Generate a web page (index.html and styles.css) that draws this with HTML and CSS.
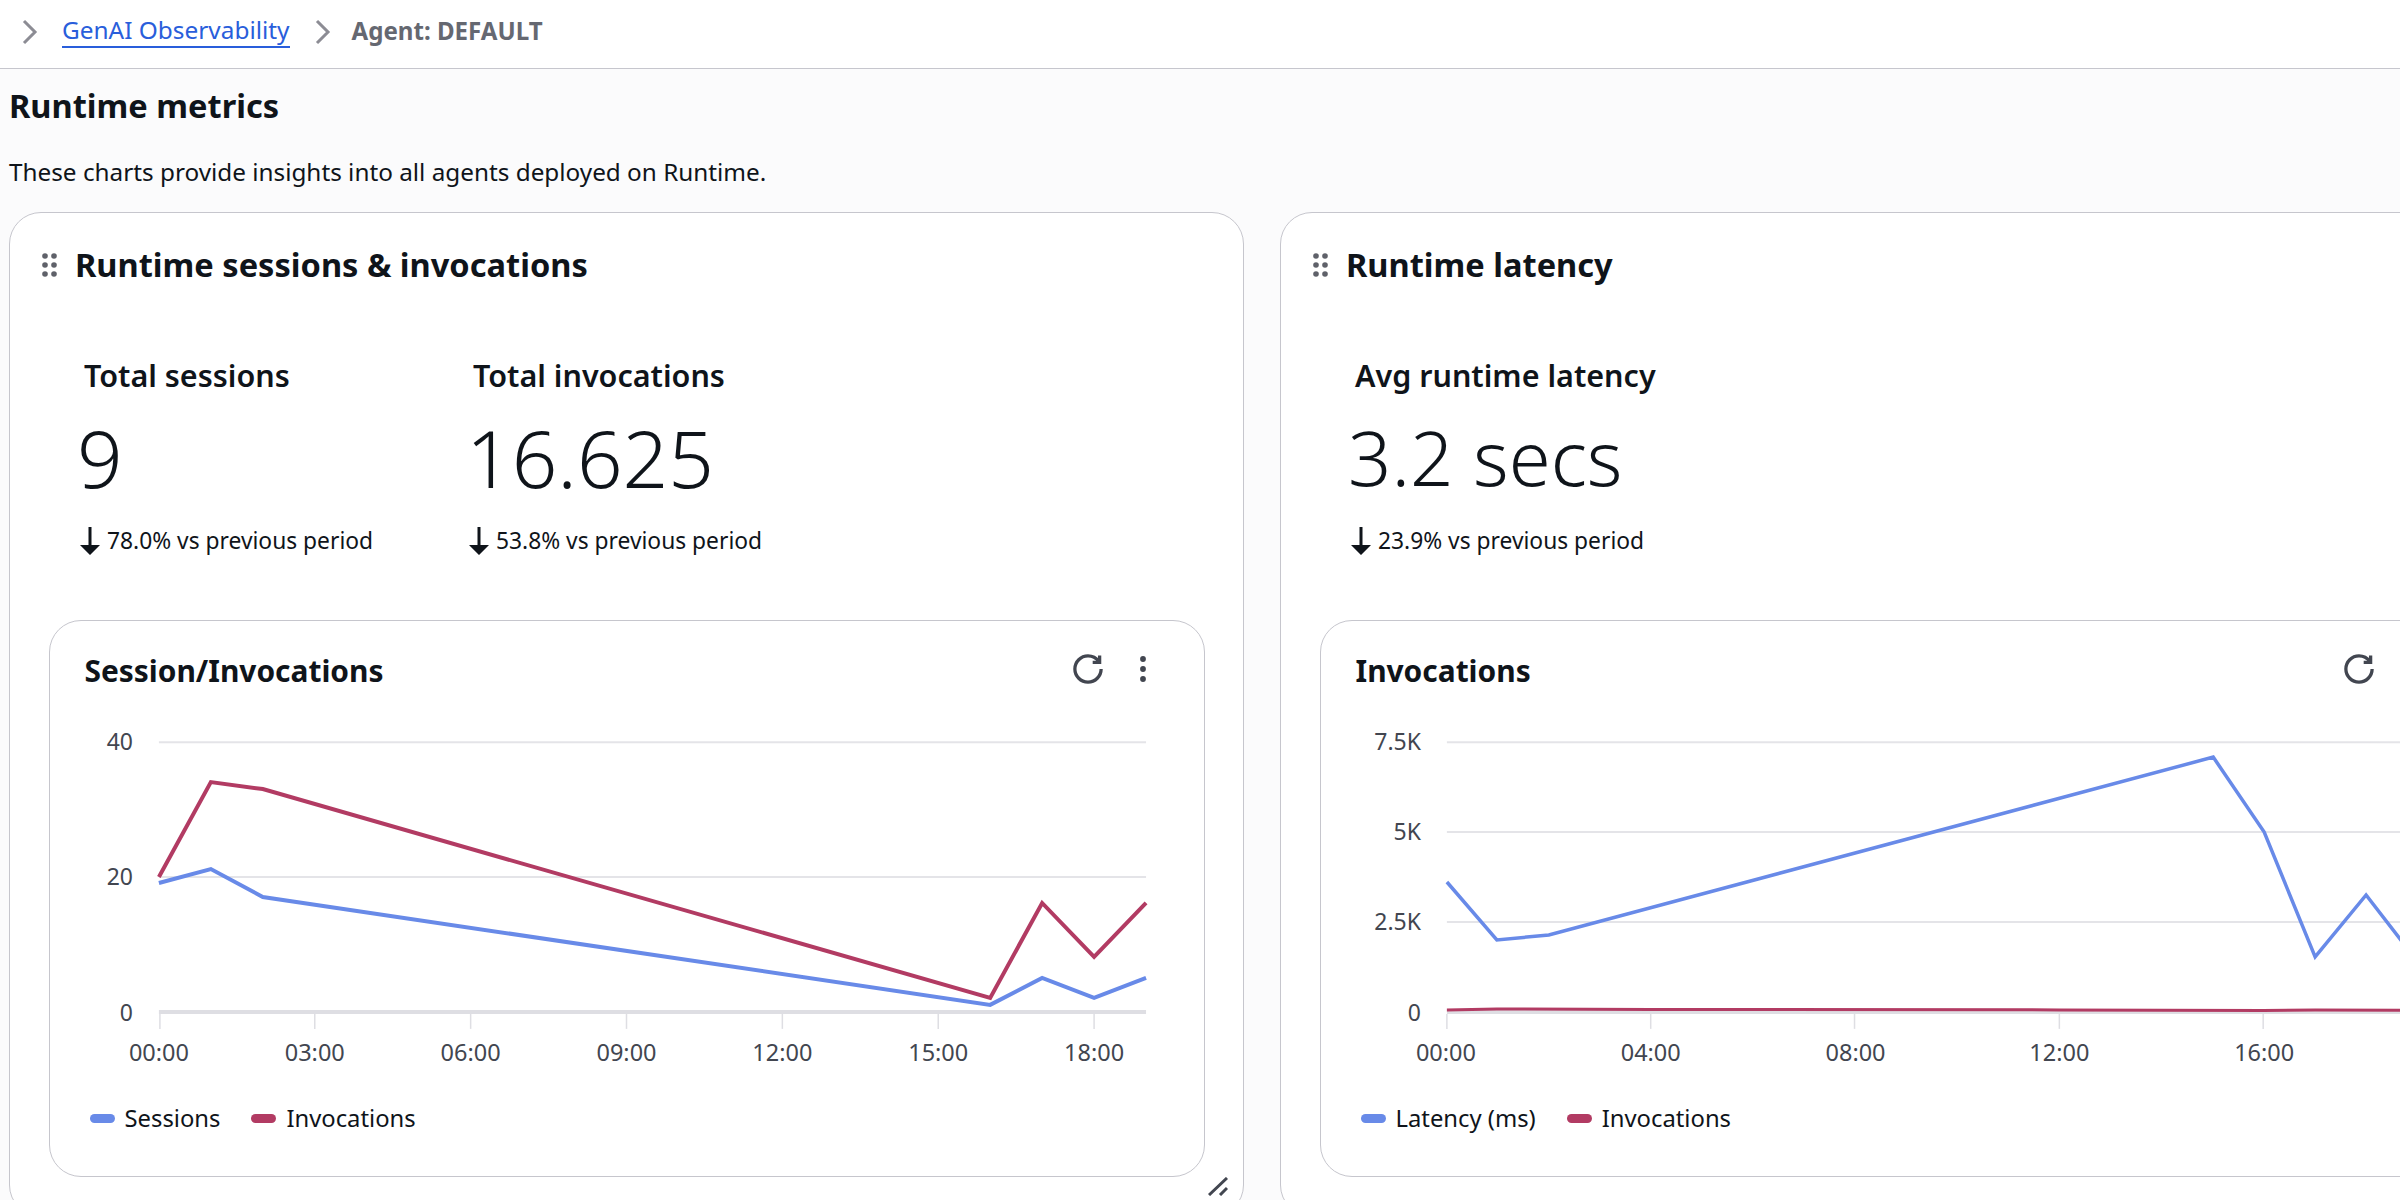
FILE: index.html
```html
<!DOCTYPE html>
<html lang="en"><head>
  <meta charset="UTF-8"><meta name="viewport" content="width=device-width, initial-scale=1.0">
  <title>Runtime metrics – GenAI Observability</title>
  <link rel="stylesheet" href="styles.css">
</head><body>

<nav class="crumbs">
  <svg class="chev" viewBox="0 0 16 26"><polyline points="2,2 13,13 2,24"/></svg>
  <a class="crumb-link" href="#">GenAI Observability</a>
  <svg class="chev" viewBox="0 0 16 26"><polyline points="2,2 13,13 2,24"/></svg>
  <span class="crumb-now">Agent: DEFAULT</span>
</nav>

<main class="page">
  <h1 class="page-title">Runtime metrics</h1>
  <p class="page-desc">These charts provide insights into all agents deployed on Runtime.</p>

  <div class="cards">

    <section class="card">
      <header class="card-head">
        <svg class="grip" viewBox="0 0 15 24"><circle cx="3" cy="3" r="2.8"/><circle cx="12" cy="3" r="2.8"/><circle cx="3" cy="12" r="2.8"/><circle cx="12" cy="12" r="2.8"/><circle cx="3" cy="21" r="2.8"/><circle cx="12" cy="21" r="2.8"/></svg>
        <h2>Runtime sessions &amp; invocations</h2>
      </header>
      <div class="metrics">
        <div class="metric">
          <div class="metric-label">Total sessions</div>
          <div class="metric-value">9</div>
          <div class="metric-delta">
            <svg class="arrow" viewBox="0 0 20 28"><path d="M8.5 0h3v18h8.500l-10 10-10-10h8.500z"/></svg>
            78.0% vs previous period
          </div>
        </div>
        <div class="metric">
          <div class="metric-label">Total invocations</div>
          <div class="metric-value">16.625</div>
          <div class="metric-delta">
            <svg class="arrow" viewBox="0 0 20 28"><path d="M8.500 0h3v18h8.500l-10 10-10-10h8.500z"/></svg>
            53.8% vs previous period
          </div>
        </div>
      </div>

      <div class="panel">
        <div class="panel-head">
          <h3>Session/Invocations</h3>
          <div class="panel-tools">
            <svg class="refresh" viewBox="0 0 16 16"><path d="M15 8c0 3.870-3.130 7-7 7s-7-3.130-7-7 3.130-7 7-7c2.370 0 4.470 1.180 5.740 2.980"/><path d="M14.200 .8v3.700h-3.700"/></svg>
            <svg class="more" viewBox="0 0 8 32"><circle cx="4" cy="6" r="2.900"/><circle cx="4" cy="16" r="2.900"/><circle cx="4" cy="26" r="2.900"/></svg>
          </div>
        </div>
        <svg class="chart" viewBox="50 700 1154 375">
          <g class="grid">
            <line x1="159" y1="742" x2="1147" y2="742"/>
            <line x1="159" y1="877" x2="1147" y2="877"/>
          </g>
          <line class="base" x1="159" y1="1012" x2="1147" y2="1012"/>
          <g class="ticks">
            <line x1="160" y1="1014" x2="160" y2="1029"/>
            <line x1="315" y1="1014" x2="315" y2="1029"/>
            <line x1="471" y1="1014" x2="471" y2="1029"/>
            <line x1="627" y1="1014" x2="627" y2="1029"/>
            <line x1="783" y1="1014" x2="783" y2="1029"/>
            <line x1="939" y1="1014" x2="939" y2="1029"/>
            <line x1="1095" y1="1014" x2="1095" y2="1029"/>
          </g>
          <g class="y-labels">
            <text x="133" y="750">40</text>
            <text x="133" y="885">20</text>
            <text x="133" y="1021">0</text>
          </g>
          <g class="x-labels">
            <text x="159" y="1061">00:00</text>
            <text x="315" y="1061">03:00</text>
            <text x="471" y="1061">06:00</text>
            <text x="627" y="1061">09:00</text>
            <text x="783" y="1061">12:00</text>
            <text x="939" y="1061">15:00</text>
            <text x="1095" y="1061">18:00</text>
          </g>
          <polyline class="line blue" points="159,883 211,869 263,897 991,1005 1043,978 1095,998 1147,978"/>
          <polyline class="line red" points="159,877 211,782 263,789 991,998 1043,903 1095,957 1147,903"/>
        </svg>
        <div class="legend">
          <span class="legend-item"><i class="swatch swatch-blue"></i>Sessions</span>
          <span class="legend-item"><i class="swatch swatch-red"></i>Invocations</span>
        </div>
      </div>
      <svg class="resize" viewBox="0 0 20 19"><path d="M1 18 19 1M12 18l7-7"/></svg>
    </section>

    <section class="card">
      <header class="card-head">
        <svg class="grip" viewBox="0 0 15 24"><circle cx="3" cy="3" r="2.8"/><circle cx="12" cy="3" r="2.8"/><circle cx="3" cy="12" r="2.8"/><circle cx="12" cy="12" r="2.8"/><circle cx="3" cy="21" r="2.8"/><circle cx="12" cy="21" r="2.8"/></svg>
        <h2>Runtime latency</h2>
      </header>
      <div class="metrics">
        <div class="metric">
          <div class="metric-label">Avg runtime latency</div>
          <div class="metric-value metric-value-unit">3.2 secs</div>
          <div class="metric-delta">
            <svg class="arrow" viewBox="0 0 20 28"><path d="M8.500 0h3v18h8.500l-10 10-10-10h8.500z"/></svg>
            23.9% vs previous period
          </div>
        </div>
      </div>

      <div class="panel">
        <div class="panel-head">
          <h3>Invocations</h3>
          <div class="panel-tools">
            <svg class="refresh" viewBox="0 0 16 16"><path d="M15 8c0 3.870-3.130 7-7 7s-7-3.130-7-7 3.130-7 7-7c2.370 0 4.470 1.180 5.740 2.980"/><path d="M14.200 .8v3.700h-3.700"/></svg>
            <svg class="more" viewBox="0 0 8 32"><circle cx="4" cy="6" r="2.900"/><circle cx="4" cy="16" r="2.900"/><circle cx="4" cy="26" r="2.900"/></svg>
          </div>
        </div>
        <svg class="chart" viewBox="1321 700 1154 375">
          <g class="grid">
            <line x1="1447" y1="742" x2="2440" y2="742"/>
            <line x1="1447" y1="832" x2="2440" y2="832"/>
            <line x1="1447" y1="922" x2="2440" y2="922"/>
          </g>
          <line class="base" x1="1447" y1="1012" x2="2440" y2="1012"/>
          <g class="ticks">
            <line x1="1447" y1="1014" x2="1447" y2="1029"/>
            <line x1="1651" y1="1014" x2="1651" y2="1029"/>
            <line x1="1855" y1="1014" x2="1855" y2="1029"/>
            <line x1="2060" y1="1014" x2="2060" y2="1029"/>
            <line x1="2264" y1="1014" x2="2264" y2="1029"/>
          </g>
          <g class="y-labels">
            <text x="1421" y="750">7.5K</text>
            <text x="1421" y="840">5K</text>
            <text x="1421" y="930">2.5K</text>
            <text x="1421" y="1021">0</text>
          </g>
          <g class="x-labels">
            <text x="1446" y="1061">00:00</text>
            <text x="1651" y="1061">04:00</text>
            <text x="1856" y="1061">08:00</text>
            <text x="2060" y="1061">12:00</text>
            <text x="2265" y="1061">16:00</text>
          </g>
          <polyline class="line blue thin" points="1447,882 1497,940 1549,935 2214,757 2265,832 2316,957 2367,895 2418,961"/>
          <polyline class="line red flat" points="1447,1010 1497,1009 1651,1009.500 2060,1010 2264,1010.500 2316,1010 2440,1010.500"/>
        </svg>
        <div class="legend">
          <span class="legend-item"><i class="swatch swatch-blue"></i>Latency (ms)</span>
          <span class="legend-item"><i class="swatch swatch-red"></i>Invocations</span>
        </div>
      </div>
    </section>

  </div>
</main>

</body></html>
```

FILE: styles.css
```css
html,body{margin:0;height:1200px;overflow:hidden;}
body{font-family:'Noto Sans',sans-serif;color:#0f141a;background:#fbfbfc;}
h1,h2,h3,p{margin:0;}

.crumbs{height:68px;background:#fff;border-bottom:1px solid #c6c6cd;display:flex;align-items:center;padding-left:22px;box-sizing:content-box;}
.chev{width:16px;height:26px;fill:none;stroke:#8c8c94;stroke-width:3;margin-top:-5px;}
.crumb-link{margin-left:24px;color:#295edb;font-size:24.400px;line-height:32px;text-decoration:none;border-bottom:2px solid #295edb;margin-top:-6px;height:32px;}
.crumb-link + .chev{margin-left:25px;}
.crumb-now{margin-left:21px;color:#656871;font-size:24.100px;font-weight:700;margin-top:-8px;}

.page{padding:17px 0 0 9px;}
.page-title{font-size:32.600px;line-height:40px;font-weight:700;}
.page-desc{margin-top:30px;font-size:24.300px;line-height:32px;}

.cards{display:grid;grid-template-columns:1235px 1235px;gap:36px;margin-top:24px;}
.card{position:relative;box-sizing:border-box;height:1005px;background:#fff;border:1.5px solid #c6c6cd;border-radius:32px;}

.card-head{display:flex;align-items:center;gap:18px;padding:32px 0 0 32px;}
.card-head h2{font-size:32.600px;line-height:40px;font-weight:700;}
.grip{width:15px;height:24px;fill:#5f6169;}

.metrics{display:flex;padding:72px 0 0 70px;}
.metric{width:389px;}
.metric-label{font-size:30.500px;line-height:36px;font-weight:600;padding-left:4px;}
.metric-value{margin:19px 0 0 -3px;font-size:80px;line-height:90px;font-weight:300;}
.metric-value-unit{font-size:76px;}
.metric-delta{margin-top:23px;font-size:22.800px;line-height:32px;display:flex;align-items:center;gap:7px;}
.arrow{width:20px;height:28px;fill:#0f141a;}

.panel{margin:63px 0 0 38.500px;width:1156px;box-sizing:border-box;background:#fff;border:1.5px solid #c6c6cd;border-radius:32px;padding-bottom:42px;}
.panel-head{display:flex;justify-content:space-between;align-items:center;padding:32px 57px 0 35px;height:68px;box-sizing:border-box;}
.panel-head h3{font-size:29.900px;line-height:36px;font-weight:700;}
.panel-tools{display:flex;align-items:center;gap:36px;margin-top:-4px;}
.refresh{width:30px;height:30px;fill:none;stroke:#424650;stroke-width:1.750;}
.more{width:8px;height:32px;fill:#424650;}

.chart{display:block;width:1153px;height:375px;overflow:hidden;margin-top:11px;}
.grid line{stroke:#e4e4e8;stroke-width:2;}
.base{stroke:#dedee3;stroke-width:4;}
.ticks line{stroke:#dedee3;stroke-width:1.500;}
.y-labels text{font-size:23px;fill:#424650;text-anchor:end;}
.x-labels text{font-size:23.500px;fill:#424650;text-anchor:middle;}
.line{fill:none;stroke-width:4;stroke-linejoin:miter;}
.blue{stroke:#688ae8;}
.red{stroke:#b23b63;}
.thin{stroke-width:3.500;}
.flat{stroke-width:3;}

.legend{display:flex;gap:31px;padding:27px 0 0 40px;font-size:23.800px;line-height:32px;}
.legend-item{display:flex;align-items:center;gap:10px;}
.swatch{width:25px;height:9px;border-radius:5px;}
.swatch-blue{background:#688ae8;}
.swatch-red{background:#b23b63;}

.resize{position:absolute;right:15px;bottom:20px;width:20px;height:19px;fill:none;stroke:#424650;stroke-width:3;}
```
